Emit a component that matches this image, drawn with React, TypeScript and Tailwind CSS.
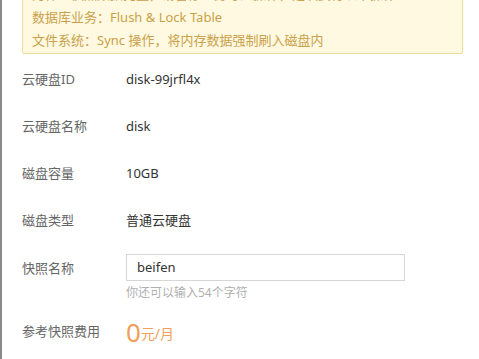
import React from "react";

const rows = [
  { label: "云硬盘ID", value: "disk-99jrfl4x" },
  { label: "云硬盘名称", value: "disk" },
  { label: "磁盘容量", value: "10GB" },
  { label: "磁盘类型", value: "普通云硬盘" },
];

export default function App() {
  return (
    <div
      className="h-[359px] w-[479px] overflow-hidden bg-white border-l-2 border-[#8a8a8a] text-[13px]"
      style={{ fontFamily: '"Noto Sans", "Noto Sans CJK SC", sans-serif' }}
    >
      {/* notice */}
      <div className="ml-[20px] mr-[16px] mt-[-22px] h-[76px] overflow-hidden rounded-[2px] border border-[#eedc9a] bg-[#fff9e1] px-[9px] pt-[4px] text-[#c9a14a]">
        <div className="h-[23px] overflow-hidden whitespace-nowrap leading-[23px]">
          为保证快照数据完整，请暂停业务写入操作，建议执行以下操作：
        </div>
        <div className="h-[23px] leading-[23px]">数据库业务：Flush &amp; Lock Table</div>
        <div className="h-[23px] leading-[23px]">文件系统：Sync 操作，将内存数据强制刷入磁盘内</div>
      </div>

      <div className="pl-[20px] pt-[14px]">
        {rows.map((r) => (
          <div key={r.label} className="flex h-[47px] items-start leading-[22px]">
            <div className="w-[104px] text-[#666]">{r.label}</div>
            <div className="text-[#333]">{r.value}</div>
          </div>
        ))}

        <div className="flex items-start">
          <div className="w-[104px] pt-[1px] leading-[22px] text-[#666]">快照名称</div>
          <div className="mt-[-2px]">
            <div className="flex h-[27px] w-[279px] items-center border border-[#d6d6d6] px-[10px] text-[#333]">
              beifen
            </div>
            <div className="mt-[2px] leading-[20px] text-[12px] text-[#b0b0b0]">你还可以输入54个字符</div>
          </div>
        </div>

        <div className="mt-[14px] flex h-[30px] items-center">
          <div className="w-[104px] text-[#666]">参考快照费用</div>
          <div className="flex items-end text-[#f0a05a]">
            <span className="text-[26px] leading-[30px]">0</span>
            <span className="pb-[3px] text-[14px]">元/月</span>
          </div>
        </div>
      </div>
    </div>
  );
}
